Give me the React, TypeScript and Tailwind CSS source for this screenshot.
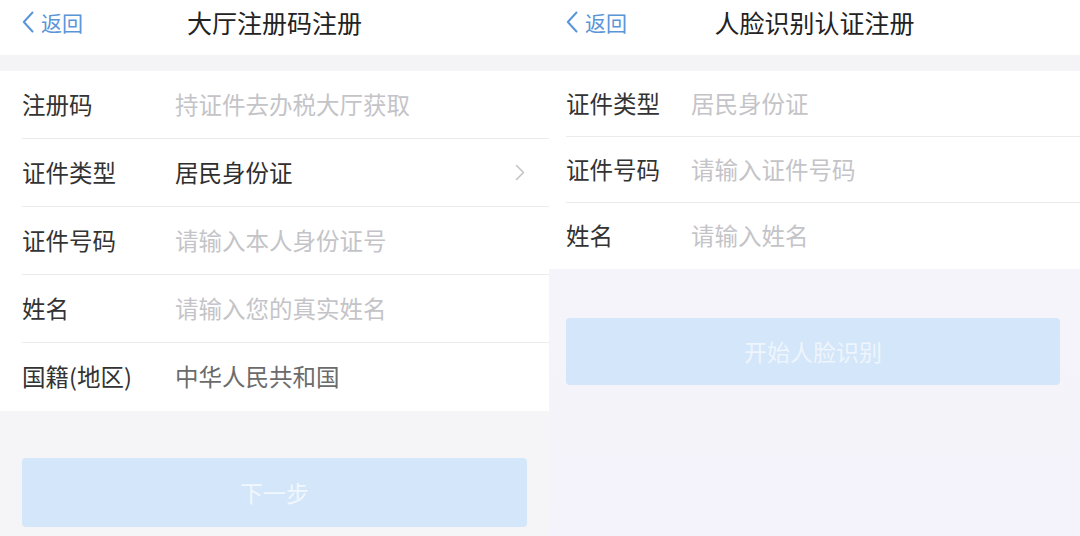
type Row = { label: string; value: string; tone: 'placeholder' | 'dark' | 'muted'; arrow?: boolean }

const leftRows: Row[] = [
  { label: '注册码', value: '持证件去办税大厅获取', tone: 'placeholder' },
  { label: '证件类型', value: '居民身份证', tone: 'dark', arrow: true },
  { label: '证件号码', value: '请输入本人身份证号', tone: 'placeholder' },
  { label: '姓名', value: '请输入您的真实姓名', tone: 'placeholder' },
  { label: '国籍(地区)', value: '中华人民共和国', tone: 'muted' },
]

const rightRows: Row[] = [
  { label: '证件类型', value: '居民身份证', tone: 'placeholder' },
  { label: '证件号码', value: '请输入证件号码', tone: 'placeholder' },
  { label: '姓名', value: '请输入姓名', tone: 'placeholder' },
]

const toneClass = {
  placeholder: 'text-[#c4c4c8]',
  dark: 'text-[#2e2e2e]',
  muted: 'text-[#6b6b6b]',
}

function Header({ title, pad }: { title: string; pad: string }) {
  return (
    <div className="relative h-[55px] bg-white">
      <div className="h-[44px] flex items-center justify-center">
        <div className={`absolute left-0 top-0 h-[44px] flex items-center gap-[7px] ${pad} text-[#5a95d8]`}>
          <svg width="12" height="22" viewBox="0 0 12 22" fill="none">
            <path d="M10.5 1.5 L1.8 11 L10.5 20.5" stroke="currentColor" strokeWidth="2" strokeLinecap="round" strokeLinejoin="round" />
          </svg>
          <span className="text-[21px] leading-none">返回</span>
        </div>
        <h1 className="text-[25px] leading-none text-[#222]">{title}</h1>
      </div>
    </div>
  )
}

function Rows({ rows, pad, valueCol, rowH }: { rows: Row[]; pad: string; valueCol: string; rowH: string }) {
  return (
    <div className="bg-white">
      {rows.map((row, i) => (
        <div key={row.label} className={pad}>
          <div
            className={`flex items-center ${rowH} ${i < rows.length - 1 ? 'border-b border-[#ececef]' : ''}`}
          >
            <span className={`${valueCol} shrink-0 text-[23.5px] text-[#333]`}>{row.label}</span>
            <span className={`flex-1 text-[23.5px] ${toneClass[row.tone]}`}>{row.value}</span>
            {row.arrow && (
              <svg width="10" height="17" viewBox="0 0 10 17" fill="none" className="mr-[24px] text-[#c4c4c8]">
                <path d="M1.5 1.5 L8.5 8.5 L1.5 15.5" stroke="currentColor" strokeWidth="1.6" strokeLinecap="round" strokeLinejoin="round" />
              </svg>
            )}
          </div>
        </div>
      ))}
    </div>
  )
}

export default function App() {
  return (
    <div
      className="flex w-[1080px] h-[536px] overflow-hidden bg-[#f5f5f8]"
      style={{ fontFamily: '"Noto Sans CJK SC", "Noto Sans", sans-serif' }}
    >
      <section className="w-[549px] flex flex-col">
        <Header title="大厅注册码注册" pad="pl-[22px]" />
        <div className="h-[16px] bg-[#f4f4f6]" />
        <Rows rows={leftRows} pad="pl-[22px]" valueCol="w-[153px]" rowH="h-[68px]" />
        <div className="flex-1 px-[22px] pt-[47px]">
          <div className="h-[69px] rounded-[4px] bg-[#d4e6f9] flex items-center justify-center text-[23px] text-[#f1f7fe]">
            下一步
          </div>
        </div>
      </section>

      <section className="flex-1 flex flex-col bg-gradient-to-b from-[#f5f5f8] to-[#f4f3fb]">
        <Header title="人脸识别认证注册" pad="pl-[17px]" />
        <div className="h-[16px] bg-[#f4f4f6]" />
        <Rows rows={rightRows} pad="pl-[17px]" valueCol="w-[125px]" rowH="h-[66px]" />
        <div className="pl-[17px] pr-[20px] pt-[49px]">
          <div className="h-[67px] rounded-[4px] bg-[#d4e6f9] flex items-center justify-center text-[23px] text-[#eef5fd]">
            开始人脸识别
          </div>
        </div>
      </section>
    </div>
  )
}
